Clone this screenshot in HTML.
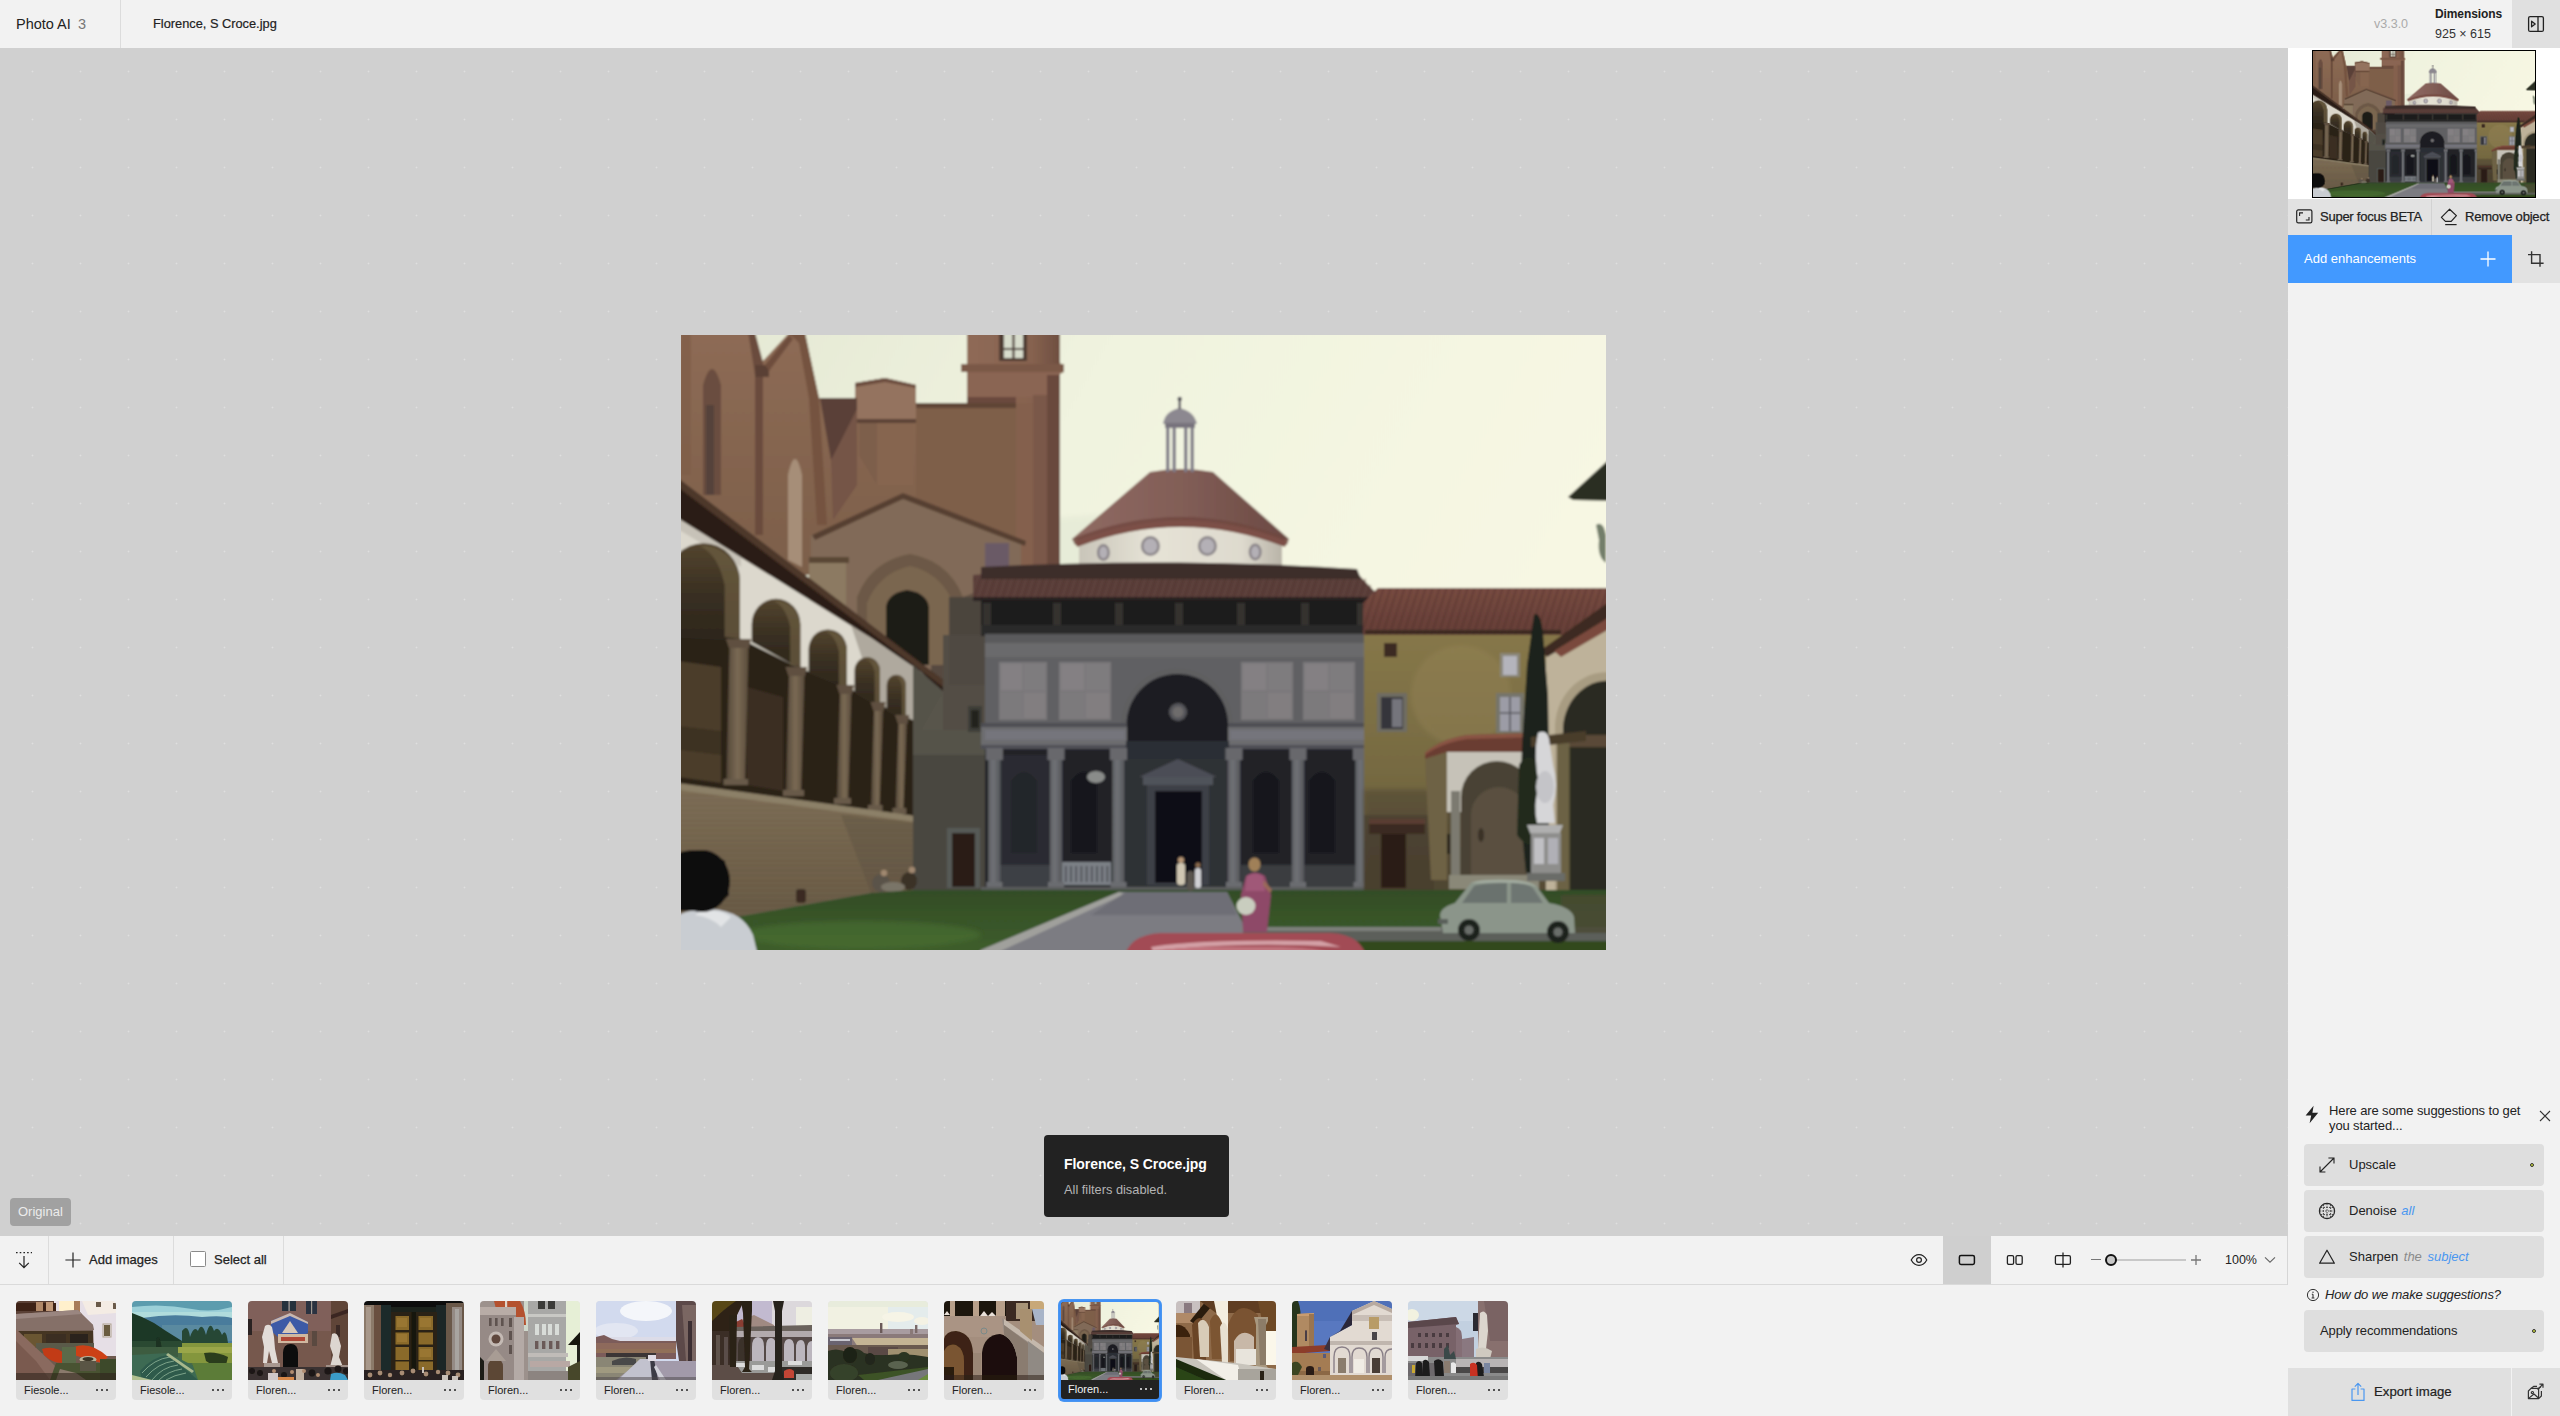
<!DOCTYPE html>
<html>
<head>
<meta charset="utf-8">
<title>Photo AI</title>
<style>
*{box-sizing:border-box;margin:0;padding:0}
html,body{width:2560px;height:1416px;overflow:hidden;background:#f2f2f2;font-family:"Liberation Sans",sans-serif;color:#222}
.abs{position:absolute}
.t{position:absolute;white-space:nowrap;line-height:1}
#topbar{left:0;top:0;width:2560px;height:48px;background:#f2f2f2}
#canvas{left:0;top:48px;width:2288px;height:1188px;background-color:#d0d0d0;
 background-image:radial-gradient(circle at 32.5px 23.5px,#dfdfdf 0.5px,rgba(220,220,220,0) 1.25px);background-size:48px 48px}
#toolbar{left:0;top:1236px;width:2288px;height:49px;background:#f2f2f2;border-bottom:1px solid #dadada}
#strip{left:0;top:1285px;width:2288px;height:131px;background:#f2f2f2}
#panel{left:2288px;top:48px;width:272px;height:1368px;background:#f2f2f2}
.vsep{position:absolute;width:1px;background:#dcdcdc}
.card{position:absolute;left:2304px;width:240px;height:42px;background:#dedede;border-radius:4px}
.th{position:absolute;top:1301px;width:100px;height:99px;border-radius:4px;overflow:hidden;background:#e0e0e0}
.th svg{position:absolute;left:0;top:0;width:100px;height:79px;display:block}
.th .lb{position:absolute;left:8px;top:84px;font-size:11px;color:#222;line-height:1;white-space:nowrap}
.th .dt{position:absolute;left:80px;top:88px;width:13px;height:3px}
.th .dt i{position:absolute;top:0;width:2px;height:2px;border-radius:1px;background:#222}
.th.sel{background:#222;box-shadow:0 0 0 2px #3f8ff5}
.th.sel .lb{color:#f2f2f2}
.th.sel .dt i{background:#f2f2f2}
</style>
</head>
<body>
<!--PHDEFS-START-->
<svg width="0" height="0" style="position:absolute"><defs>
<filter id="soft" x="-2%" y="-2%" width="104%" height="104%"><feGaussianBlur stdDeviation="1.1"/></filter>
<filter id="soft2" x="-5%" y="-5%" width="110%" height="110%"><feGaussianBlur stdDeviation="2.2"/></filter>
<linearGradient id="gsky" x1="0" y1="0" x2="1" y2="0.25"><stop offset="0" stop-color="#e3e7d3"/><stop offset="0.45" stop-color="#f0f3df"/><stop offset="1" stop-color="#f7f7e3"/></linearGradient>
<linearGradient id="gbrick" x1="0" y1="0" x2="0" y2="1"><stop offset="0" stop-color="#8e6b55"/><stop offset="1" stop-color="#7c5f4a"/></linearGradient>
<linearGradient id="gtower" x1="0" y1="0" x2="1" y2="0"><stop offset="0" stop-color="#8f6a57"/><stop offset="0.7" stop-color="#86624f"/><stop offset="1" stop-color="#6e4e40"/></linearGradient>
<linearGradient id="gdome" x1="0" y1="0" x2="1" y2="0"><stop offset="0" stop-color="#8f6a62"/><stop offset="0.5" stop-color="#825e57"/><stop offset="1" stop-color="#6b4943"/></linearGradient>
<linearGradient id="gdrum" x1="0" y1="0" x2="1" y2="0"><stop offset="0" stop-color="#c9c5b9"/><stop offset="0.35" stop-color="#e6e3d6"/><stop offset="0.8" stop-color="#dedace"/><stop offset="1" stop-color="#b9b4a8"/></linearGradient>
<linearGradient id="garc" x1="0" y1="0" x2="0" y2="1"><stop offset="0" stop-color="#54452f"/><stop offset="0.5" stop-color="#3a3022"/><stop offset="1" stop-color="#2c261c"/></linearGradient>
<linearGradient id="gpar" x1="0" y1="0" x2="0" y2="1"><stop offset="0" stop-color="#7e6e56"/><stop offset="1" stop-color="#625440"/></linearGradient>
<linearGradient id="gochre" x1="0" y1="0" x2="0" y2="1"><stop offset="0" stop-color="#877849"/><stop offset="0.55" stop-color="#766a42"/><stop offset="1" stop-color="#544a34"/></linearGradient>
<linearGradient id="ggrass" x1="0" y1="0" x2="0" y2="1"><stop offset="0" stop-color="#334d27"/><stop offset="1" stop-color="#3f5f2b"/></linearGradient>
<linearGradient id="gcol" x1="0" y1="0" x2="1" y2="0"><stop offset="0" stop-color="#5c5e62"/><stop offset="0.4" stop-color="#707276"/><stop offset="1" stop-color="#54565a"/></linearGradient>
<linearGradient id="gccol" x1="0" y1="0" x2="1" y2="0"><stop offset="0" stop-color="#54483a"/><stop offset="0.5" stop-color="#7a6a54"/><stop offset="1" stop-color="#5a4c3c"/></linearGradient>
<linearGradient id="groof" x1="0" y1="0" x2="0" y2="1"><stop offset="0" stop-color="#774a40"/><stop offset="1" stop-color="#643e37"/></linearGradient>
<pattern id="tiles" width="7" height="43" patternUnits="userSpaceOnUse" patternTransform="skewX(-18)"><rect width="7" height="43" fill="none"/><rect x="0" width="1.6" height="43" fill="#4a2a26" opacity="0.45"/></pattern>
<pattern id="bricks" width="9" height="5" patternUnits="userSpaceOnUse"><rect y="0" width="9" height="1" fill="#3a3024" opacity="0.25"/></pattern>
</defs>
<symbol id="ph" viewBox="0 0 925 615" preserveAspectRatio="none">
<g filter="url(#soft)">
<rect x="-10" y="-10" width="945" height="420" fill="url(#gsky)"/>
<ellipse cx="420" cy="250" rx="160" ry="70" fill="#e2e8d4" opacity="0.6" filter="url(#soft2)"/>
<path d="M-10,-10H72L81,27L108,-2H124L138,63H175V48L204,43L235,50V68H286V34H280V29H286V-10H379V28L383,31V37L379,39V240H-10Z" fill="url(#gbrick)"/>
<rect x="286" y="-10" width="93" height="250" fill="url(#gtower)"/>
<path d="M280,29H383V37H280Z" fill="#7a5846"/>
<path d="M286,37H379V62H286Z" fill="#8a6552"/>
<path d="M286,62H335V68H286Z" fill="#6a4a3c"/>
<rect x="352" y="60" width="27" height="180" fill="#7a5848"/>
<rect x="366" y="40" width="13" height="200" fill="#694a3d"/>
<rect x="318" y="-10" width="28" height="36" fill="#4e3a30"/>
<rect x="323" y="-10" width="19" height="33" fill="#d8dccc"/>
<path d="M332.5,-5V23M323,14H342" stroke="#4a3a34" stroke-width="2.2"/>
<path d="M235,68H335V215H235Z" fill="#7e5e4a"/>
<path d="M235,68H335V73H235Z" fill="#5f4436"/>
<rect x="335" y="68" width="17" height="172" fill="#84614e"/>
<path d="M174,48L204,43L235,50V84H174Z" fill="#94735e"/>
<path d="M174,48L204,43L235,50V53L204,47L174,52Z" fill="#6a4c3e"/>
<path d="M178,84H232V150H196L178,120Z" fill="#7d5e4c"/>
<path d="M196,84H232V150H196Z" fill="#86654f"/>
<path d="M174,84H235V88H174Z" fill="#5c4234"/>
<path d="M139,63H176V108L150,125Z" fill="#5a4038"/>
<path d="M150,125L176,74V150L152,185Z" fill="#745446"/>
<path d="M72,-10L82,27V200H74V40L66,-10Z" fill="#6b4c3d"/>
<path d="M74,30H88V42H74Z" fill="#5a4034"/>
<path d="M22,160V50Q31,18 40,50V160Z" fill="#6a4e40"/>
<path d="M25,160V70H33V160Z" fill="#54423a"/>
<path d="M0,-10H10V140H0Z" fill="#7d5c48" opacity="0.6"/>
<path d="M108,-2H124L138,63L146,190H136L128,63L118,8Z" fill="#74533f"/>
<path d="M107,225V140Q114,108 121,140V232Z" fill="#a68e78"/>
<path d="M84,30L108,0L112,4L88,36Z" fill="#6e4e3e"/>
<path d="M222,161L340,208V400H130V200Z" fill="#816b58"/>
<path d="M222,158L345,206L344,211L222,164L134,205L131,200Z" fill="#574032"/>
<path d="M128,222H165V300H128Z" fill="#8c7a62"/>
<path d="M128,222H168V228H128Z" fill="#5a4636"/>
<rect x="304" y="208" width="24" height="26" fill="#6a5a66"/>
<path d="M250,262L282,262L340,240V400H250Z" fill="#4a3e36" opacity="0.55"/>
<path d="M250,300H340V400H250Z" fill="#463c36" opacity="0.4"/>
<path d="M176,330V262Q190,226 229,219Q268,226 282,262V330Z" fill="#6c5846"/>
<path d="M186,330V268Q198,238 229,231Q260,238 272,268V330Z" fill="#7a6650"/>
<path d="M205,330V272Q207,258 226,255Q246,258 248,272V330Z" fill="#1f1c18"/>
<path d="M-10,138L266,348V364L240,337L190,303L-10,179Z" fill="#2a1e17"/>
<path d="M-10,138L266,348L262,352L-10,147Z" fill="#4e382c"/>
<path d="M-10,179L190,303L240,337L266,364L262,400L246,394L225,384L197,371L164,353L116,334L58,305L-10,298Z" fill="#dcd8cd"/>
<path d="M170,290L240,337L266,364L262,400L246,394L225,384L197,371Z" fill="#a09a8e" opacity="0.75"/>
<path d="M-10,179L60,222L60,232L-10,190Z" fill="#b9b4aa" opacity="0.6"/>
<path d="M-10,296L58,303L116,332L164,351L197,369L225,382L246,392V487L-10,454Z" fill="#2b2218"/>
<path d="M-14,302V246.5A36.5,38.325 0 0 1 59,246.5V306Z" fill="url(#garc)"/>
<path d="M18.85,211A36.5,38.325 0 0 1 59,246.5V304L43.67,302V250.15Q37.1,219.125 18.85,211Z" fill="#6b5c40" opacity="0.75"/>
<path d="M70.7,307V289.35A24.35,25.567500000000003 0 0 1 119.4,289.35V334Z" fill="url(#garc)"/>
<path d="M92.61500000000001,266A24.35,25.567500000000003 0 0 1 119.4,289.35V332L109.173,330V291.785Q104.79,271.0875 92.61500000000001,266Z" fill="#6b5c40" opacity="0.75"/>
<path d="M127.6,338V314.59999999999997A19.200000000000003,20.160000000000004 0 0 1 166,314.59999999999997V354Z" fill="url(#garc)"/>
<path d="M144.88,296.4A19.200000000000003,20.160000000000004 0 0 1 166,314.59999999999997V352L157.936,350V316.52Q154.48,300.2 144.88,296.4Z" fill="#6b5c40" opacity="0.75"/>
<path d="M173.5,358V335.75A12.75,13.387500000000001 0 0 1 199,335.75V373Z" fill="url(#garc)"/>
<path d="M184.975,324A12.75,13.387500000000001 0 0 1 199,335.75V371L193.645,369V337.025Q191.35,326.1875 184.975,324Z" fill="#6b5c40" opacity="0.75"/>
<path d="M205.7,376V349.95000000000005A9.650000000000006,10.132500000000006 0 0 1 225,349.95000000000005V386Z" fill="url(#garc)"/>
<path d="M214.385,341.3A9.650000000000006,10.132500000000006 0 0 1 225,349.95000000000005V384L220.947,382V350.915Q219.21,342.71250000000003 214.385,341.3Z" fill="#6b5c40" opacity="0.75"/>
<path d="M233,388V357.5A6.5,6.825 0 0 1 246,357.5V394Z" fill="url(#garc)"/>
<path d="M238.85,352A6.5,6.825 0 0 1 246,357.5V392L243.27,390V358.15Q242.1,352.625 238.85,352Z" fill="#6b5c40" opacity="0.75"/>
<path d="M-10,325L40,332V448L-10,441Z" fill="#4b3c2a"/>
<path d="M66,352L102,362V456L66,450Z" fill="#3a2f21"/>
<path d="M-10,390L40,396V420L-10,414Z" fill="#3e3224"/>
<path d="M48.5,312H67.5L64,449H45.5Z" fill="url(#gccol)"/>
<path d="M45.0,304H70L68,313H48.0Z" fill="#5e5040"/>
<rect x="42.5" y="444" width="24.5" height="6" fill="#675a48"/>
<path d="M108,340H123.5L120,460H105Z" fill="url(#gccol)"/>
<path d="M104.5,332H126L124,341H107.5Z" fill="#5e5040"/>
<rect x="102" y="455" width="21" height="6" fill="#675a48"/>
<path d="M159,358H170.5L167,468H156Z" fill="url(#gccol)"/>
<path d="M155.5,350H173L171,359H158.5Z" fill="#5e5040"/>
<rect x="153" y="463" width="17" height="6" fill="#675a48"/>
<path d="M193,375H202.0L198.5,475H190Z" fill="url(#gccol)"/>
<path d="M189.5,367H204.5L202.5,376H192.5Z" fill="#5e5040"/>
<rect x="187" y="470" width="14.5" height="6" fill="#675a48"/>
<path d="M217.5,388H225.8L222.3,478H214.5Z" fill="url(#gccol)"/>
<path d="M214.0,380H228.3L226.3,389H217.0Z" fill="#5e5040"/>
<rect x="211.5" y="473" width="13.800000000000011" height="6" fill="#675a48"/>
<path d="M-10,450L235,484V556L190,558L50,583L40,625H-10Z" fill="url(#gpar)"/>
<path d="M-10,450L235,484V556L190,558L50,583L40,625H-10Z" fill="url(#bricks)" opacity="0.5"/>
<path d="M-10,447L235,481V487L-10,454Z" fill="#8c8068"/>
<path d="M160,480L235,488V556L190,558Z" fill="#5e5240" opacity="0.45"/>
<path d="M232,330L262,356L266,345L306,345V556H232Z" fill="#55524a"/>
<path d="M240,395H306V300H262V356Z" fill="#58544b"/>
<path d="M268,262H306V350H268Z" fill="#4c443c"/>
<path d="M262,300H306V395H262Z" fill="#514c44" opacity="0.8"/>
<path d="M232,420H306V556H232Z" fill="#44433d" opacity="0.75"/>
<rect x="266" y="493" width="33" height="60" fill="#565a56"/>
<rect x="271" y="498" width="23" height="54" fill="#2a1a13"/>
<rect x="287" y="371" width="14" height="26" fill="#3c3e38"/><rect x="290" y="375" width="8" height="18" fill="#22241f"/>
<ellipse cx="200" cy="548" rx="9" ry="9" fill="#5a5248"/><ellipse cx="228" cy="546" rx="8" ry="9" fill="#3a3028"/><ellipse cx="212" cy="552" rx="12" ry="5" fill="#7a7468"/>
<circle cx="203" cy="538" r="3.2" fill="#a08870"/><circle cx="231" cy="535" r="3.2" fill="#a08870"/>
<rect x="115" y="554" width="10" height="14" rx="3" fill="#3a2c22"/>
<path d="M469,137Q500,131 532,137L608,204Q500,228 391,204Z" fill="url(#gdome)"/>
<path d="M391,204Q500,160 608,204L606,210Q500,170 394,210Z" fill="#6e463e" opacity="0.8"/>
<path d="M398,208Q500,168 601,208V236H398Z" fill="url(#gdrum)"/>
<path d="M394,206Q500,164 606,206L604,212Q500,172 396,212Z" fill="#7b5046"/>
<ellipse cx="422.4" cy="217.5" rx="6.5" ry="8.5" fill="#8a8488"/><ellipse cx="422.4" cy="217.5" rx="4" ry="6" fill="#b4b0b6"/>
<ellipse cx="469.4" cy="211" rx="9.5" ry="10.0" fill="#8a8488"/><ellipse cx="469.4" cy="211" rx="7" ry="7.5" fill="#b4b0b6"/>
<ellipse cx="526.4" cy="211" rx="9.5" ry="10.0" fill="#8a8488"/><ellipse cx="526.4" cy="211" rx="7" ry="7.5" fill="#b4b0b6"/>
<ellipse cx="574.2" cy="217" rx="6.5" ry="8.5" fill="#8a8488"/><ellipse cx="574.2" cy="217" rx="4" ry="6" fill="#b4b0b6"/>
<path d="M482,89Q484,76 498.5,73Q513,76 516,89Z" fill="#8c8890"/>
<rect x="484" y="88" width="30" height="5" fill="#77727c"/>
<rect x="485" y="92" width="3.4" height="45" fill="#7e7a86"/>
<rect x="491.5" y="92" width="3.4" height="45" fill="#7e7a86"/>
<rect x="503" y="92" width="3.4" height="45" fill="#7e7a86"/>
<rect x="509.5" y="92" width="3.4" height="45" fill="#7e7a86"/>
<rect x="497.5" y="63" width="2.4" height="11" fill="#55505a"/><circle cx="498.7" cy="64" r="2.2" fill="#4a4650"/>
<path d="M292,240Q496,220 676,238L700,263H292Z" fill="#5b403b"/>
<path d="M300,232Q496,222 676,234L680,244H300Z" fill="#3e2e2c"/>
<path d="M292,243H684L700,263H292Z" fill="url(#tiles)"/>
<path d="M292,262H700V266H292Z" fill="#2a2020"/>
<rect x="300" y="265" width="388" height="36" fill="#1d1c1c"/>
<rect x="302" y="268" width="8" height="32" fill="#34322f"/>
<rect x="372" y="268" width="8" height="32" fill="#34322f"/>
<rect x="434" y="268" width="8" height="32" fill="#34322f"/>
<rect x="494" y="268" width="8" height="32" fill="#34322f"/>
<rect x="556" y="268" width="8" height="32" fill="#34322f"/>
<rect x="620" y="268" width="8" height="32" fill="#34322f"/>
<rect x="676" y="268" width="8" height="32" fill="#34322f"/>
<rect x="300" y="290" width="388" height="10" fill="#2a2a2a"/>
<rect x="304" y="299" width="384" height="92" fill="#616164"/>
<rect x="304" y="299" width="384" height="9" fill="#5a5a5c"/>
<rect x="304" y="308" width="384" height="14" fill="#6a6a6c"/>
<rect x="318" y="327" width="48" height="58" fill="#7a787a"/>
<rect x="320" y="329" width="21.0" height="26" fill="#848083"/><rect x="343.0" y="329" width="21.0" height="26" fill="#7e7c7e"/>
<rect x="320" y="358" width="21.0" height="25" fill="#7c7a7c"/><rect x="343.0" y="358" width="21.0" height="25" fill="#827e80"/>
<rect x="378" y="327" width="52" height="58" fill="#7a787a"/>
<rect x="380" y="329" width="23.0" height="26" fill="#848083"/><rect x="405.0" y="329" width="23.0" height="26" fill="#7e7c7e"/>
<rect x="380" y="358" width="23.0" height="25" fill="#7c7a7c"/><rect x="405.0" y="358" width="23.0" height="25" fill="#827e80"/>
<rect x="560" y="327" width="52" height="58" fill="#7a787a"/>
<rect x="562" y="329" width="23.0" height="26" fill="#848083"/><rect x="587.0" y="329" width="23.0" height="26" fill="#7e7c7e"/>
<rect x="562" y="358" width="23.0" height="25" fill="#7c7a7c"/><rect x="587.0" y="358" width="23.0" height="25" fill="#827e80"/>
<rect x="622" y="327" width="52" height="58" fill="#7a787a"/>
<rect x="624" y="329" width="23.0" height="26" fill="#848083"/><rect x="649.0" y="329" width="23.0" height="26" fill="#7e7c7e"/>
<rect x="624" y="358" width="23.0" height="25" fill="#7c7a7c"/><rect x="649.0" y="358" width="23.0" height="25" fill="#827e80"/>
<path d="M440,412V389A56,56 0 0 1 552,389V412Z" fill="#5e5e60"/>
<path d="M445.6,412V389.6A50.7,50.7 0 0 1 547,389.6V412Z" fill="#1c1c21"/>
<circle cx="497" cy="377" r="9" fill="#55555a"/><circle cx="497" cy="377" r="5.5" fill="#6e6c6c"/>
<rect x="300" y="388" width="146" height="26" fill="#6c6c6e"/><rect x="547" y="388" width="145" height="26" fill="#6c6c6e"/>
<rect x="304" y="395" width="140" height="10" fill="#74747c"/><rect x="549" y="395" width="140" height="10" fill="#74747c"/>
<rect x="300" y="388" width="146" height="4" fill="#4e4e52"/><rect x="547" y="388" width="145" height="4" fill="#4e4e52"/>
<rect x="300" y="410" width="146" height="4" fill="#505056"/><rect x="547" y="410" width="145" height="4" fill="#505056"/>
<rect x="304" y="414" width="384" height="140" fill="#202226"/>
<rect x="445" y="406" width="103" height="148" fill="#2e3036"/>
<rect x="445" y="406" width="103" height="18" fill="#2c2e34"/>
<path d="M330,518V446Q343,428 356,446V518Z" fill="#15161a"/>
<path d="M390,518V446Q403,428 416,446V518Z" fill="#15161a"/>
<path d="M572,518V446Q585,428 598,446V518Z" fill="#15161a"/>
<path d="M628,518V446Q641,428 654,446V518Z" fill="#15161a"/>
<rect x="320" y="420" width="48" height="110" fill="#33353a" opacity="0.5"/>
<path d="M458,442L497,424L536,442Z" fill="#4c4e56"/>
<rect x="462" y="442" width="70" height="8" fill="#50525a"/>
<rect x="466" y="450" width="62" height="100" fill="#3e4046"/>
<rect x="474" y="456" width="47" height="92" fill="#101014"/>
<ellipse cx="415" cy="442" rx="9" ry="6" fill="#8a8c8a"/>
<rect x="381" y="527" width="49" height="23" fill="#7c8086"/>
<rect x="384.0" y="531" width="1.6" height="16" fill="#4a4c52"/>
<rect x="389.2" y="531" width="1.6" height="16" fill="#4a4c52"/>
<rect x="394.4" y="531" width="1.6" height="16" fill="#4a4c52"/>
<rect x="399.6" y="531" width="1.6" height="16" fill="#4a4c52"/>
<rect x="404.8" y="531" width="1.6" height="16" fill="#4a4c52"/>
<rect x="410.0" y="531" width="1.6" height="16" fill="#4a4c52"/>
<rect x="415.2" y="531" width="1.6" height="16" fill="#4a4c52"/>
<rect x="420.4" y="531" width="1.6" height="16" fill="#4a4c52"/>
<rect x="425.6" y="531" width="1.6" height="16" fill="#4a4c52"/>
<rect x="318" y="530" width="58" height="22" fill="#3e4044"/><rect x="560" y="530" width="120" height="22" fill="#3a3c40"/>
<rect x="307.2" y="424" width="12.4" height="128" fill="url(#gcol)"/>
<rect x="304.9" y="413" width="17" height="12" fill="#67686c"/>
<rect x="305.4" y="547" width="16" height="7" fill="#6a6c70"/>
<rect x="368.8" y="424" width="12.4" height="128" fill="url(#gcol)"/>
<rect x="366.5" y="413" width="17" height="12" fill="#67686c"/>
<rect x="367" y="547" width="16" height="7" fill="#6a6c70"/>
<rect x="431.3" y="424" width="12.4" height="128" fill="url(#gcol)"/>
<rect x="429.0" y="413" width="17" height="12" fill="#67686c"/>
<rect x="429.5" y="547" width="16" height="7" fill="#6a6c70"/>
<rect x="546.8" y="424" width="12.4" height="128" fill="url(#gcol)"/>
<rect x="544.5" y="413" width="17" height="12" fill="#67686c"/>
<rect x="545" y="547" width="16" height="7" fill="#6a6c70"/>
<rect x="610.8" y="424" width="12.4" height="128" fill="url(#gcol)"/>
<rect x="608.5" y="413" width="17" height="12" fill="#67686c"/>
<rect x="609" y="547" width="16" height="7" fill="#6a6c70"/>
<rect x="674.3" y="424" width="12.4" height="128" fill="url(#gcol)"/>
<rect x="672.0" y="413" width="17" height="12" fill="#67686c"/>
<rect x="672.5" y="547" width="16" height="7" fill="#6a6c70"/>
<rect x="300" y="552" width="392" height="5" fill="#5a5c5c"/>
<rect x="683" y="290" width="250" height="270" fill="url(#gochre)"/>
<ellipse cx="780" cy="360" rx="50" ry="50" fill="#96845a" opacity="0.4" filter="url(#soft2)"/>
<path d="M697,253H935V300H682V268Z" fill="url(#groof)"/>
<path d="M697,253H935V300H682V268Z" fill="url(#tiles)"/>
<path d="M684,295H880V299H684Z" fill="#3a2a24"/>
<rect x="703" y="308" width="13" height="14" fill="#3a2a22"/>
<rect x="696" y="358" width="30" height="39" fill="#6e6c62"/><rect x="700" y="362" width="22" height="32" fill="#34343a"/><rect x="711" y="364" width="10" height="28" fill="#74747c"/>
<rect x="819" y="318" width="20" height="24" fill="#8a8678"/><rect x="822" y="321" width="14" height="19" fill="#b4b4bc"/>
<rect x="815" y="358" width="28" height="40" fill="#76746a"/><rect x="819" y="362" width="20" height="34" fill="#9c9ca6"/><path d="M829,362V396M819,378H839" stroke="#55555c" stroke-width="1.6"/>
<rect x="683" y="455" width="170" height="101" fill="#4c4230" opacity="0.5" filter="url(#soft2)"/><rect x="683" y="480" width="70" height="76" fill="#443a2c" opacity="0.55"/>
<path d="M688,484H744V499H688Z" fill="#3a2c22"/><path d="M688,484H744V489H688Z" fill="#5a3c30"/>
<rect x="700" y="499" width="25" height="54" fill="#2a1d19"/>
<rect x="757" y="499" width="12" height="20" fill="#24221e"/><rect x="825" y="500" width="13" height="19" fill="#24221e"/>
<path d="M744,418Q760,404 786,400L856,398V417H766L744,424Z" fill="#6a3c32"/>
<path d="M744,420Q760,408 786,404L856,402V398L786,400Q760,404 744,418Z" fill="#8a5444"/>
<rect x="766" y="417" width="90" height="60" fill="#c6c2b8"/>
<path d="M744,424L766,417V545H750Z" fill="#6e6244"/>
<path d="M780,545V462A36,36 0 0 1 852,462V545Z" fill="#494336"/>
<path d="M790,545V480A28,28 0 0 1 846,480V545Z" fill="#5a5040"/>
<rect x="770" y="456" width="9" height="90" fill="#7c7a70"/>
<rect x="768" y="540" width="90" height="14" fill="#8a8878"/>
<ellipse cx="800" cy="500" rx="3" ry="7" fill="#3a3228"/>
<path d="M865,312L935,268V560H865Z" fill="#beb29a"/>
<path d="M860,315L935,262V282L866,322Z" fill="#3c2a22"/>
<path d="M873,316L935,278V290L880,322Z" fill="#7a4a3c"/>
<path d="M874,560V390A52,56 0 0 1 935,338V560Z" fill="#a89c82"/>
<path d="M882,560V392A46,50 0 0 1 935,346V560Z" fill="#2c2a22"/>
<path d="M882,400H935V412H882Z" fill="#5a4a38"/>
<path d="M887,162L935,118V166L892,165Z" fill="#2a2e22"/>
<path d="M915,190Q922,185 925,200L925,228Q916,222 918,205Z" fill="#3a4a38" opacity="0.7"/>
<path d="M853,280Q859,275 862,298L867,360L868,420Q870,500 863,538H845Q838,480 841,410L846,330Z" fill="#1b241a"/>
<path d="M838,430Q850,410 862,440L866,500Q850,520 836,500Z" fill="#202a1e"/>
<rect x="876" y="406" width="12.5" height="153" fill="#6c6244"/>
<path d="M850,402L905,396V406L850,412Z" fill="#4a3c2c"/>
<path d="M857,398Q866,394 868,404L872,430Q878,450 872,470L874,488H856Q852,470 858,450Q852,420 857,398Z" fill="#d6d6d8"/>
<ellipse cx="864" cy="452" rx="9" ry="16" fill="#c4c4c8"/>
<path d="M846,490H882L878,500H850Z" fill="#b0b0b0"/>
<rect x="850" y="498" width="30" height="44" fill="#8e8e8c"/><rect x="853" y="503" width="10" height="26" fill="#c0c0c4"/><rect x="867" y="503" width="10" height="26" fill="#b0b0b6"/>
<rect x="846" y="538" width="38" height="8" fill="#6a6c68"/>
<path d="M50,583L190,558L235,555H935V625H30Z" fill="url(#ggrass)"/>
<ellipse cx="180" cy="600" rx="120" ry="14" fill="#4e7434" opacity="0.5" filter="url(#soft2)"/>
<path d="M438,557H546L566,596H700V606H600L590,625H292L300,615Z" fill="#7c7c82"/>
<path d="M438,557L300,615L292,625H300L444,559Z" fill="#a0a09c"/>
<path d="M445,557H546L556,580H410Z" fill="#6e6e76"/>
<path d="M560,592H935V607H566Z" fill="#5c5e5a"/>
<path d="M560,592H760V596H560Z" fill="#7e807c"/>
<path d="M590,606H935V625H585Z" fill="#33481f"/>
<path d="M880,560H935V598H880Z" fill="#4a4a32" opacity="0.8"/>
<rect x="496" y="528" width="8" height="22" rx="3" fill="#cfc6b2"/><circle cx="500" cy="525" r="3" fill="#b89878"/>
<rect x="514" y="533" width="6" height="20" rx="2.5" fill="#d0d0d4"/><circle cx="517" cy="530" r="2.6" fill="#8a6a50"/>
<rect x="506" y="536" width="7" height="20" rx="3" fill="#5a5450"/>
<path d="M565,541Q574,534 584,541L590,560L586,597H562L560,560Z" fill="#8e4868"/>
<path d="M566,541Q574,536 582,541L584,556H564Z" fill="#a05878"/>
<ellipse cx="573.5" cy="529.5" rx="6" ry="7" fill="#a08058"/>
<ellipse cx="565" cy="571" rx="9.5" ry="9" fill="#c9cdbf"/>
<path d="M583,545L591,555L589,558L582,550Z" fill="#9a6a58"/>
<path d="M443,625Q446,600 480,598H650Q682,600 686,625Z" fill="#a24b54"/>
<path d="M470,612Q520,604 640,606L660,612Q560,606 472,616Z" fill="#d3a0a6"/>
<path d="M455,625Q470,614 520,612H600Q650,613 670,625Z" fill="#c88088" opacity="0.8"/>
<path d="M759,580Q760,572 774,568L790,548Q800,544 830,545Q850,546 856,552L868,568Q890,572 893,582L894,598H762Z" fill="#8b958a"/>
<path d="M793,551Q800,548 826,548V568H781Z" fill="#6a726e"/><path d="M830,548Q846,548 852,553L862,568H830Z" fill="#6e7672"/>
<path d="M790,548Q800,544 830,545Q850,546 856,552L850,550Q830,546 800,548Z" fill="#a4aea2"/>
<circle cx="788" cy="595" r="11" fill="#1e201e"/><circle cx="877" cy="597" r="11" fill="#1e201e"/><circle cx="788" cy="595" r="4.5" fill="#6a6e6a"/><circle cx="877" cy="597" r="4.5" fill="#6a6e6a"/>
<rect x="757" y="584" width="10" height="5" fill="#5a5e5a"/>
<path d="M-10,625V586Q0,574 30,574Q62,576 72,600L78,625Z" fill="#c9cdd2"/>
<path d="M20,576Q40,574 50,582L40,592Q30,582 14,580Z" fill="#e2e4e6"/>
<ellipse cx="21" cy="546" rx="28" ry="31" fill="#0c0a0a"/>
<path d="M-10,520Q20,508 44,526L48,560Q30,580 -10,575Z" fill="#0c0a0a"/>
</g></symbol></svg>

<!--PHDEFS-END-->
<!-- TOP BAR -->
<div id="topbar" class="abs">
  <div class="t" style="left:16px;top:17px;font-size:14.5px;color:#222">Photo AI</div>
  <div class="t" style="left:78px;top:17px;font-size:14.5px;color:#777">3</div>
  <div class="vsep" style="left:120px;top:0;height:48px"></div>
  <div class="t" style="left:153px;top:18px;font-size:12.8px;color:#222;-webkit-text-stroke:0.2px #222">Florence, S Croce.jpg</div>
  <div class="t" style="left:2374px;top:18px;font-size:12.5px;color:#aaa">v3.3.0</div>
  <div class="t" style="left:2435px;top:8px;font-size:12px;font-weight:bold;color:#222;letter-spacing:-0.1px">Dimensions</div>
  <div class="t" style="left:2435px;top:28px;font-size:12.5px;color:#333">925 × 615</div>
  <div class="abs" style="left:2512px;top:0;width:48px;height:48px;background:#e0e0e0">
    <svg class="abs" style="left:15px;top:15px" width="18" height="18" viewBox="0 0 18 18" fill="none" stroke="#222" stroke-width="1.3"><rect x="1.6" y="1.6" width="14.8" height="14.8" rx="1.5"/><path d="M11 1.6V16.4M4.6 6.2L8.2 9L4.6 11.8Z" stroke-linejoin="round"/></svg>
  </div>
</div>

<!-- CANVAS -->
<div id="canvas" class="abs"></div>
<div id="photo" class="abs" style="left:681px;top:335px;width:925px;height:615px;background:#777">
<svg class="abs" style="left:0;top:0" width="925" height="615" viewBox="0 0 925 615"><use href="#ph"/></svg>
</div>

<!-- original badge -->
<div class="abs" style="left:10px;top:1198px;width:61px;height:28px;border-radius:4px;background:#a1a1a1"></div>
<div class="t" style="left:18px;top:1205px;font-size:13px;color:#ececec">Original</div>

<!-- tooltip -->
<div class="abs" style="left:1044px;top:1135px;width:185px;height:82px;border-radius:4px;background:#222"></div>
<div class="t" style="left:1064px;top:1157px;font-size:14px;font-weight:bold;color:#fff;letter-spacing:-0.05px">Florence, S Croce.jpg</div>
<div class="t" style="left:1064px;top:1184px;font-size:12.8px;color:#b4b4b4">All filters disabled.</div>

<!-- TOOLBAR -->
<div id="toolbar" class="abs"></div>
<!--TOOLBAR-START-->
<svg class="abs" style="left:14px;top:1250px" width="20" height="20" viewBox="0 0 20 20" fill="none" stroke="#222" stroke-width="1.2"><path d="M2 2.6H18" stroke-dasharray="1.6 2.1" stroke-width="1.4"/><path d="M10 6V17.4M5.2 12.8L10 17.6L14.8 12.8"/></svg>
<div class="vsep" style="left:48px;top:1236px;height:48px"></div>
<svg class="abs" style="left:64px;top:1251px" width="18" height="18" viewBox="0 0 18 18" fill="none" stroke="#222" stroke-width="1.2"><path d="M9 1.4V16.6M1.4 9H16.6"/></svg>
<div class="t" style="left:89px;top:1253px;font-size:13px;color:#222;-webkit-text-stroke:0.25px #222">Add images</div>
<div class="vsep" style="left:173px;top:1236px;height:48px"></div>
<div class="abs" style="left:190px;top:1251px;width:16px;height:16px;background:#fff;border:1px solid #8a8a8a;border-radius:1.5px"></div>
<div class="t" style="left:214px;top:1253px;font-size:13px;color:#222;-webkit-text-stroke:0.25px #222">Select all</div>
<div class="vsep" style="left:283px;top:1236px;height:48px"></div>

<!-- right tools -->
<svg class="abs" style="left:1910px;top:1251px" width="18" height="18" viewBox="0 0 18 18" fill="none" stroke="#222" stroke-width="1.2"><path d="M1.2 9C3.2 5.4 5.8 3.6 9 3.6S14.8 5.4 16.8 9C14.8 12.6 12.2 14.4 9 14.4S3.2 12.6 1.2 9Z" stroke-linejoin="round"/><circle cx="9" cy="9" r="2.4"/></svg>
<div class="abs" style="left:1943px;top:1236px;width:48px;height:48px;background:#cfcfcf"></div>
<svg class="abs" style="left:1958px;top:1253px" width="18" height="14" viewBox="0 0 18 14" fill="none" stroke="#111" stroke-width="1.5"><rect x="1.4" y="2.4" width="15" height="9" rx="1.6"/></svg>
<svg class="abs" style="left:2006px;top:1253px" width="18" height="14" viewBox="0 0 18 14" fill="none" stroke="#222" stroke-width="1.3"><rect x="1.4" y="2.6" width="6.2" height="8.8" rx="1.4"/><rect x="10" y="2.6" width="6.2" height="8.8" rx="1.4"/></svg>
<svg class="abs" style="left:2054px;top:1251px" width="18" height="18" viewBox="0 0 18 18" fill="none" stroke="#222" stroke-width="1.3"><path d="M9 4.6H2.8Q1.4 4.6 1.4 6V12Q1.4 13.4 2.8 13.4H9M9 4.6H15Q16.4 4.6 16.4 6V12Q16.4 13.4 15 13.4H9M9 1.6V16.4"/></svg>
<div class="abs" style="left:2091px;top:1259px;width:10px;height:1.4px;background:#777"></div>
<div class="abs" style="left:2112px;top:1259.4px;width:74px;height:1.2px;background:#c8c8c8"></div>
<div class="abs" style="left:2105px;top:1254px;width:12px;height:12px;border-radius:6px;background:#c8c8c8;border:2px solid #111"></div>
<svg class="abs" style="left:2190px;top:1254px" width="12" height="12" viewBox="0 0 12 12" fill="none" stroke="#777" stroke-width="1.3"><path d="M6 1V11M1 6H11"/></svg>
<div class="t" style="left:2225px;top:1254px;font-size:12.5px;color:#222">100%</div>
<svg class="abs" style="left:2264px;top:1255px" width="12" height="10" viewBox="0 0 12 10" fill="none" stroke="#666" stroke-width="1.1"><path d="M1 2.4L6 7.2L11 2.4"/></svg>
<div class="vsep" style="left:2287px;top:1236px;height:180px;background:#d6d6d6"></div>
<!--TOOLBAR-END-->

<!-- STRIP -->
<div id="strip" class="abs"></div>
<!--STRIP-START-->
<svg width="0" height="0" style="position:absolute"><defs><filter id="tb" x="-5%" y="-5%" width="110%" height="110%"><feGaussianBlur stdDeviation="0.6"/></filter></defs></svg>
<div class="th" style="left:16px"><svg viewBox="0 0 100 79" preserveAspectRatio="none"><g filter="url(#tb)"><rect x="-5" y="-5" width="110" height="89" fill="#777"/><rect width="100" height="79" fill="#6e5a50"/>
<path d="M0,0H100V14H0Z" fill="#5a4034"/>
<path d="M38,0H100V55H78L77,24L62,10H38Z" fill="#e6dfe6"/>
<path d="M43,0H62V12H43Z" fill="#fff0cc"/><path d="M58,0H64V11H58Z" fill="#a87c58"/>
<path d="M66,0H100V12L72,14Z" fill="#f4ece4"/>
<rect x="80" y="1" width="5" height="5" fill="#6a5a48"/><rect x="97" y="2" width="3" height="6" fill="#6a5a48"/>
<path d="M0,2H40V10H0Z" fill="#3c2418"/><path d="M20,1H27V10H20Z" fill="#b08868"/><path d="M30,1H37V10H30Z" fill="#c09878"/>
<path d="M0,13L62,9L77,24L78,29L0,31Z" fill="#857068"/>
<path d="M0,13L62,9L66,13L0,18Z" fill="#9a8680"/>
<path d="M2,30H77V47H2Z" fill="#453624"/>
<path d="M8,33H26V46H8Z" fill="#6a5630"/><path d="M30,33H50V46H30Z" fill="#3a2e20"/><path d="M54,33H72V46H54Z" fill="#2c241a"/>
<rect x="88" y="24" width="6" height="11" fill="#6a5c40"/><rect x="87" y="23" width="8" height="13" fill="none" stroke="#b0a490" stroke-width="1"/>
<path d="M20,42H78V52H20Z" fill="#5a5a48"/>
<path d="M0,28L32,58L46,72L40,79H0Z" fill="#8a6a5e"/>
<path d="M0,40L20,60L34,79H0Z" fill="#7a5a50"/>
<path d="M26,48Q40,44 50,54L46,62Q36,62 28,54Z" fill="#c23a18"/>
<path d="M58,46Q74,40 92,56L86,62Q70,58 58,54Z" fill="#cc4018"/>
<path d="M46,46H60V62H46Z" fill="#5a6a48"/>
<path d="M40,62H100V79H34Z" fill="#4a5232"/>
<path d="M84,58H100V79H84Z" fill="#3e4a2a"/>
<ellipse cx="72" cy="58.5" rx="8.5" ry="3.6" fill="#b8b098"/><ellipse cx="72" cy="58" rx="5.5" ry="2" fill="#3a3428"/><path d="M64,60H80V70H64Z" fill="#5a5444"/>
<path d="M44,68L60,72L70,79H40Z" fill="#8a7a6c"/>
<path d="M0,72H100V79H0Z" fill="#2c2018" opacity="0.55"/></g></svg><div class="lb">Fiesole...</div><div class="dt"><i style="left:0"></i><i style="left:5px"></i><i style="left:10px"></i></div></div>
<div class="th" style="left:132px"><svg viewBox="0 0 100 79" preserveAspectRatio="none"><g filter="url(#tb)"><rect x="-5" y="-5" width="110" height="89" fill="#777"/><rect width="100" height="79" fill="#4a6a48"/>
<rect width="100" height="18" fill="#5c9cae"/>
<path d="M0,6Q30,2 60,8Q80,12 100,6V16H0Z" fill="#9cd0d8"/>
<path d="M0,11H100V17H0Z" fill="#b0dcdc"/>
<path d="M10,17Q40,12 70,16Q90,14 100,17V42H10Z" fill="#4a7c9c"/>
<path d="M30,24H100V40H30Z" fill="#5a8aa0"/>
<path d="M0,12L10,16L22,22L34,30L50,40L50,48H0Z" fill="#1c3826"/>
<path d="M0,40H60V52H0Z" fill="#2c4a30"/>
<path d="M50,30Q56,22 58,36Q62,24 66,30Q70,20 74,34Q78,18 82,30Q86,24 90,34Q94,26 96,42L96,44H50Z" fill="#254636"/>
<path d="M24,38Q28,30 30,50H24Z" fill="#1a3020"/>
<path d="M50,42H100V62H50Z" fill="#84963e"/>
<path d="M46,46H100V52H46Z" fill="#9aa648"/>
<path d="M72,52Q84,50 96,56L94,64Q82,66 74,60Z" fill="#2c3c1c"/>
<path d="M0,46H46V56H0Z" fill="#3e5c40"/>
<path d="M0,54L36,52L60,64L100,72V79H0Z" fill="#3c6a52"/>
<path d="M8,70Q20,56 36,54L66,79H10Z" fill="#2e5a4c"/>
<g fill="none" stroke="#9cc0a0" stroke-width="0.9" opacity="0.8"><path d="M10,72Q22,58 38,56"/><path d="M14,76Q26,62 42,60"/><path d="M20,79Q30,66 46,64"/><path d="M27,79Q36,70 50,68"/><path d="M34,79Q42,74 54,72"/></g>
<path d="M36,52L62,70L60,72L34,54Z" fill="#a8b88c"/>
<path d="M60,62H100V79H66Z" fill="#5c7c38"/>
<path d="M0,74L20,79H0Z" fill="#b0c090"/></g></svg><div class="lb">Fiesole...</div><div class="dt"><i style="left:0"></i><i style="left:5px"></i><i style="left:10px"></i></div></div>
<div class="th" style="left:248px"><svg viewBox="0 0 100 79" preserveAspectRatio="none"><g filter="url(#tb)"><rect x="-5" y="-5" width="110" height="89" fill="#777"/><rect width="100" height="79" fill="#76594e"/>
<path d="M0,0H100V30H0Z" fill="#80605a"/>
<path d="M83,0H100V79H83Z" fill="#5e4438"/>
<path d="M83,14L100,8V12L83,18Z" fill="#3a2820"/>
<rect x="34" y="0" width="14" height="10" fill="#28303e"/><rect x="40.5" y="0" width="1.2" height="10" fill="#b0a8a0"/>
<rect x="58" y="0" width="11" height="13" fill="#2a3040"/><rect x="63" y="0" width="1.2" height="13" fill="#a09890"/>
<path d="M23,30V20L32,16L42,13L52,17L60,21V32L52,36H30Z" fill="#3c5aa6"/>
<path d="M34,32L42,20L50,32Z" fill="#d8c8b8"/>
<path d="M30,33H60V42H30Z" fill="#d0b8a0"/><path d="M33,36H57V40H33Z" fill="#b04838"/>
<path d="M23,20L42,12L60,21L60,23L42,15L23,23Z" fill="#c8b8b0"/>
<rect x="0" y="18" width="4" height="16" fill="#2a2420"/>
<rect x="64" y="30" width="5" height="15" fill="#5a4840"/>
<rect x="88" y="24" width="4" height="12" fill="#3a2c28"/>
<path d="M35,70V52Q35,43 43,43Q50,43 50,52V70Z" fill="#0a0a0a"/>
<path d="M17,25Q21,22 24,26L26,36L27,48L30,62H24L21,50L19,62H15L16,46L14,36Z" fill="#e2dcd8"/>
<rect x="16" y="62" width="16" height="12" fill="#a89890"/>
<path d="M84,33Q88,31 90,35L93,45L91,56L95,66H82L85,54L82,45Z" fill="#dcd6d0"/>
<rect x="78" y="64" width="22" height="6" fill="#a09088"/>
<rect x="0" y="66" width="100" height="13" fill="#3a3230"/>
<g fill="#1c1816"><circle cx="4" cy="70" r="3"/><circle cx="12" cy="72" r="3"/><circle cx="36" cy="74" r="3"/><circle cx="64" cy="72" r="3.4"/><circle cx="80" cy="70" r="3.6"/><circle cx="90" cy="68" r="3.4"/><circle cx="98" cy="70" r="3"/></g>
<path d="M83,73Q90,70 97,74L100,79H82Z" fill="#3a9cc8"/>
<path d="M30,76H46V79H30Z" fill="#d88848"/><path d="M48,68H56V79H48Z" fill="#c0b0a0"/><path d="M20,72H30V79H20Z" fill="#d0c8c8"/>
<g fill="#b08c70"><circle cx="44" cy="71" r="2"/><circle cx="56" cy="70" r="2"/><circle cx="70" cy="74" r="2"/><circle cx="26" cy="70" r="2"/></g></g></svg><div class="lb">Floren...</div><div class="dt"><i style="left:0"></i><i style="left:5px"></i><i style="left:10px"></i></div></div>
<div class="th" style="left:364px"><svg viewBox="0 0 100 79" preserveAspectRatio="none"><g filter="url(#tb)"><rect x="-5" y="-5" width="110" height="89" fill="#777"/><rect width="100" height="79" fill="#1a201e"/>
<rect x="0" y="0" width="100" height="6" fill="#0e1010"/>
<rect x="0" y="4" width="10" height="75" fill="#8c7a6a"/><rect x="2" y="6" width="5" height="66" fill="#a8988a"/>
<rect x="10" y="4" width="7" height="75" fill="#6a5040"/>
<rect x="82" y="2" width="18" height="77" fill="#6a5848"/><rect x="88" y="6" width="10" height="68" fill="#948a84"/><rect x="91" y="8" width="4" height="64" fill="#a8a4a0"/>
<rect x="17" y="4" width="10" height="70" fill="#1e2a2a"/><rect x="72" y="4" width="10" height="70" fill="#1c2626"/>
<rect x="27" y="11" width="46" height="62" fill="#2c2414"/>
<g fill="#8a6a2a"><rect x="31.5" y="15" width="13.5" height="14"/><rect x="54.5" y="15" width="14.5" height="14"/><rect x="31.5" y="31.5" width="13.5" height="12"/><rect x="54.5" y="31.5" width="14.5" height="12"/><rect x="31.5" y="46" width="13.5" height="13"/><rect x="54.5" y="46" width="14.5" height="13"/><rect x="31.5" y="60.5" width="13.5" height="9"/><rect x="54.5" y="60.5" width="14.5" height="9"/></g>
<g fill="#a07c34" opacity="0.7"><rect x="33" y="17" width="10" height="9"/><rect x="56" y="17" width="11" height="9"/><rect x="33" y="33" width="10" height="8"/><rect x="56" y="48" width="11" height="8"/></g>
<rect x="47.5" y="11" width="4.5" height="62" fill="#14140e"/>
<rect x="0" y="69" width="100" height="10" fill="#2a2420"/>
<g fill="#a88c74"><circle cx="6" cy="74" r="2.4"/><circle cx="16" cy="72" r="2.4"/><circle cx="26" cy="74" r="2.2"/><circle cx="38" cy="72" r="2.4"/><circle cx="49" cy="70" r="2.4"/><circle cx="62" cy="73" r="2.4"/><circle cx="74" cy="71" r="2.2"/><circle cx="84" cy="72" r="2.4"/><circle cx="94" cy="74" r="2.4"/></g>
<g fill="#c8c0b8"><rect x="58" y="66" width="2" height="6"/><rect x="78" y="74" width="6" height="5"/><rect x="88" y="75" width="6" height="4"/></g></g></svg><div class="lb">Floren...</div><div class="dt"><i style="left:0"></i><i style="left:5px"></i><i style="left:10px"></i></div></div>
<div class="th" style="left:480px"><svg viewBox="0 0 100 79" preserveAspectRatio="none"><g filter="url(#tb)"><rect x="-5" y="-5" width="110" height="89" fill="#777"/><rect width="100" height="79" fill="#9c918c"/>
<rect x="86" y="0" width="14" height="79" fill="#e6efd6"/>
<path d="M44,0H52V30H44Z" fill="#cfd8cc"/>
<path d="M14,0H40Q46,10 46,24H30L16,8Z" fill="#b4512f"/>
<rect x="25" y="0" width="2.2" height="12" fill="#e0d4c8"/>
<path d="M0,6H36V14H0Z" fill="#b8aca6"/>
<rect x="0" y="14" width="36" height="65" fill="#968a86"/>
<rect x="34" y="16" width="10" height="63" fill="#b4aaa6"/>
<rect x="48" y="0" width="38" height="79" fill="#a8a8a6"/>
<rect x="48" y="13" width="38" height="3" fill="#c8c8c4"/><rect x="48" y="52" width="40" height="4" fill="#c0bcb8"/><rect x="50" y="60" width="40" height="6" fill="#b8a8a4"/>
<g fill="#d8dcd8"><rect x="55" y="23" width="4" height="11"/><rect x="62" y="23" width="4" height="11"/><rect x="68" y="23" width="4" height="11"/><rect x="75" y="23" width="4" height="11"/></g>
<g fill="#6a5a58"><rect x="55" y="40" width="3.4" height="8"/><rect x="62" y="40" width="3.4" height="8"/><rect x="69" y="40" width="3.4" height="8"/><rect x="76" y="40" width="3.4" height="8"/></g>
<rect x="58" y="0" width="7" height="8" fill="#3a3a38"/><rect x="68" y="0" width="7" height="8" fill="#3a3a38"/>
<circle cx="16" cy="38" r="7.5" fill="#c4bab4"/><circle cx="16" cy="38" r="4.5" fill="#5e463c"/>
<path d="M8,79V66Q8,58 16,58Q23,58 23,66V79Z" fill="#5c4636"/>
<path d="M6,60L16,48L26,60Z" fill="#a89c94"/>
<g fill="#5e5250"><rect x="9" y="17" width="2.6" height="8"/><rect x="15" y="17" width="2.6" height="8"/><rect x="21" y="17" width="2.6" height="8"/><rect x="29" y="17" width="3" height="9"/><rect x="29" y="30" width="3" height="9"/><rect x="29" y="44" width="3" height="9"/></g>
<path d="M0,56L4,60V79H0Z" fill="#1c1a18"/>
<path d="M88,44L100,31V44Z" fill="#14140f"/><path d="M97,44H100V66H97Z" fill="#22201a"/>
<path d="M88,66L100,60V79H88Z" fill="#46462c"/>
<rect x="48" y="70" width="40" height="9" fill="#8c8480"/></g></svg><div class="lb">Floren...</div><div class="dt"><i style="left:0"></i><i style="left:5px"></i><i style="left:10px"></i></div></div>
<div class="th" style="left:596px"><svg viewBox="0 0 100 79" preserveAspectRatio="none"><g filter="url(#tb)"><rect x="-5" y="-5" width="110" height="89" fill="#777"/><rect width="100" height="79" fill="#d2daee"/>
<ellipse cx="50" cy="10" rx="26" ry="10" fill="#f4f6fa"/><ellipse cx="20" cy="30" rx="22" ry="8" fill="#e2e6f2"/>
<rect x="0" y="36" width="82" height="8" fill="#dcdce8"/>
<path d="M0,36L8,34L16,38L24,40H80V58H0Z" fill="#7c5c5a"/>
<path d="M0,42H80V48H0Z" fill="#8e6a5c"/><path d="M0,48H80V52H0Z" fill="#a07c58" opacity="0.6"/>
<path d="M10,52H60V60H10Z" fill="#3a3434"/>
<path d="M0,56H50V79H0Z" fill="#8a8674"/>
<path d="M0,66H46V72H0Z" fill="#a09a80"/>
<path d="M16,60Q28,54 40,58V64H16Z" fill="#4a4848"/>
<path d="M80,0H100V66H84L80,40Z" fill="#5c4a48"/>
<path d="M86,4H100V60H90Z" fill="#7a6662"/><rect x="92" y="20" width="4" height="40" fill="#3a2e30"/>
<path d="M44,60H100V79H20Z" fill="#a29aaa"/>
<path d="M44,58L54,58L60,79H22Z" fill="#c2c2ce"/>
<path d="M54,58H58L62,79H56Z" fill="#3a3a44"/>
<path d="M60,64L70,79H64L58,66Z" fill="#d0d0d8"/>
<rect x="52" y="54" width="8" height="6" fill="#e0dce4"/>
<rect x="0" y="76" width="100" height="3" fill="#4a4448" opacity="0.5"/></g></svg><div class="lb">Floren...</div><div class="dt"><i style="left:0"></i><i style="left:5px"></i><i style="left:10px"></i></div></div>
<div class="th" style="left:712px"><svg viewBox="0 0 100 79" preserveAspectRatio="none"><g filter="url(#tb)"><rect x="-5" y="-5" width="110" height="89" fill="#777"/><rect width="100" height="79" fill="#c2bad0"/>
<path d="M60,0H100V34H60Z" fill="#dcd8dc"/><path d="M84,6H100V30H84Z" fill="#eeeee2"/>
<path d="M0,0H30L22,22L10,34H0Z" fill="#3e3010"/>
<path d="M0,0H26L14,18L0,30Z" fill="#584612"/>
<path d="M0,20Q12,8 24,0H32L18,28L16,64H0Z" fill="#2e2414"/>
<path d="M22,22L42,14L62,24V32H22Z" fill="#a08a82"/>
<path d="M22,22L30,18L34,26H22Z" fill="#8a3c30"/>
<path d="M20,26L100,24V34H20Z" fill="#6a625c"/>
<path d="M20,30H100V38H20Z" fill="#b2aaac"/>
<rect x="20" y="36" width="80" height="30" fill="#544a46"/>
<g fill="#bcb6be"><path d="M40,64V46Q40,36 46,36Q52,36 52,46V64Z"/><path d="M54,64V46Q54,37 59,37Q64,37 64,46V64Z"/><path d="M72,64V46Q72,38 77,38Q82,38 82,46V64Z"/><path d="M84,64V47Q84,39 89,39Q93,39 93,47V64Z"/><path d="M95,64V48Q95,40 100,40V64Z"/></g>
<path d="M26,64V46Q26,36 32,36Q38,36 38,46V64Z" fill="#3a302c"/>
<rect x="0" y="30" width="22" height="40" fill="#3a2e28"/>
<rect x="4" y="34" width="4" height="30" fill="#5e524c"/><rect x="12" y="36" width="4" height="28" fill="#5a4e48"/>
<path d="M0,64H70V79H0Z" fill="#5c4e46"/>
<path d="M22,60H100V72H30Z" fill="#9a9a98"/>
<g fill="#dcdcdc"><rect x="24" y="62" width="10" height="4"/><rect x="40" y="64" width="12" height="5"/><rect x="56" y="66" width="10" height="5"/><rect x="76" y="60" width="14" height="4"/></g>
<path d="M70,66H100V79H64Z" fill="#2e2a28"/>
<path d="M72,70Q78,66 82,70V77H72Z" fill="#c44434"/>
<rect x="84" y="73" width="16" height="6" fill="#a8aaa8"/>
<path d="M29,0H40L40,10L37,68L40,71H30L33,66L31,12Z" fill="#2c2218"/>
<path d="M61,0H72L70,10V70L72,79H60L63,70V10Z" fill="#28201a"/>
<path d="M17,14L25,14L24,66H18Z" fill="#2a2016"/></g></svg><div class="lb">Floren...</div><div class="dt"><i style="left:0"></i><i style="left:5px"></i><i style="left:10px"></i></div></div>
<div class="th" style="left:828px"><svg viewBox="0 0 100 79" preserveAspectRatio="none"><g filter="url(#tb)"><rect x="-5" y="-5" width="110" height="89" fill="#777"/><rect width="100" height="79" fill="#2e3222"/>
<rect width="100" height="32" fill="#f1f1e2"/>
<path d="M60,0H100V28H60Z" fill="#e4ecec"/><ellipse cx="70" cy="16" rx="16" ry="5" fill="#f6f4e6"/><ellipse cx="94" cy="20" rx="8" ry="4" fill="#f4f2e4"/>
<path d="M0,0H100V6H0Z" fill="#e8ecdc"/>
<path d="M0,30H100V50H0Z" fill="#8a7a7a"/>
<path d="M0,28H100V33H0Z" fill="#a89ca0"/>
<rect x="52" y="22" width="2.4" height="10" fill="#6a5a58"/><rect x="87" y="24" width="2.4" height="8" fill="#7a6a68"/><rect x="82" y="28" width="3" height="5" fill="#8a7a78"/>
<path d="M24,37H100V46H30Z" fill="#c4b494"/>
<path d="M0,36H24V44H0Z" fill="#6a6470"/><path d="M2,38H22V40H2Z" fill="#c8c8d0"/>
<path d="M0,44H100V54H0Z" fill="#6a5a50"/>
<path d="M40,46H70V54H40Z" fill="#5a4a44"/>
<path d="M60,48H100V56H60Z" fill="#a09070"/>
<path d="M0,50Q10,46 20,52Q28,44 36,52Q50,56 60,54Q80,52 100,56V79H0Z" fill="#2c3020"/>
<ellipse cx="22" cy="54" rx="7" ry="8" fill="#1c2014"/><ellipse cx="42" cy="58" rx="5" ry="6" fill="#20261a"/><ellipse cx="76" cy="56" rx="6" ry="5" fill="#2a3420"/>
<ellipse cx="16" cy="72" rx="14" ry="9" fill="#36422c"/><ellipse cx="70" cy="64" rx="10" ry="4" fill="#5a6450"/>
<path d="M30,74L100,66V79H36Z" fill="#3c5226"/>
<path d="M50,79L100,68V79Z" fill="#76767a"/>
<path d="M90,79L100,73V79Z" fill="#6a8a3c"/></g></svg><div class="lb">Floren...</div><div class="dt"><i style="left:0"></i><i style="left:5px"></i><i style="left:10px"></i></div></div>
<div class="th" style="left:944px"><svg viewBox="0 0 100 79" preserveAspectRatio="none"><g filter="url(#tb)"><rect x="-5" y="-5" width="110" height="89" fill="#777"/><rect width="100" height="79" fill="#a48e7e"/>
<rect width="100" height="15" fill="#1e140e"/>
<g fill="#b8a08a"><rect x="6" y="0" width="5" height="15"/><rect x="29" y="0" width="6" height="15"/><rect x="52" y="0" width="9" height="15"/></g>
<g fill="#e8e0d8"><path d="M0,14L3,10L6,14Z"/><path d="M36,15L40,10L44,15Z"/><path d="M44,15L48,11L52,15Z"/></g>
<path d="M62,0H100V20H62Z" fill="#3a2c22"/><path d="M72,2H84V18H72Z" fill="#a89478"/><path d="M86,0H100V8H86Z" fill="#c8a878"/>
<path d="M88,8H100V24H92Z" fill="#a8b4c8"/>
<path d="M0,15H60V36H0Z" fill="#aa9484"/>
<circle cx="40" cy="30" r="3" fill="none" stroke="#7a8a8a" stroke-width="1"/>
<path d="M0,79V38Q2,30 12,30Q28,32 29,52V79Z" fill="#3c2414"/>
<path d="M0,79V50Q4,42 12,44Q20,48 20,60V79Z" fill="#7a5430"/>
<path d="M0,66H10V79H0Z" fill="#2a1a10"/>
<rect x="29" y="52" width="8" height="27" fill="#9a8674"/>
<path d="M38,79V52Q40,34 56,33Q70,36 73,56V79Z" fill="#1a100c"/>
<path d="M58,17L72,30L100,52V79H73V56Q70,40 60,34Z" fill="#988c84"/>
<path d="M60,18L100,46V52L60,24Z" fill="#c4b8ac"/>
<path d="M60,24L84,42V79H73V56Q70,40 60,34Z" fill="#8a7c70"/>
<path d="M84,40L100,52V79H84Z" fill="#908a84"/>
<path d="M76,8H88V40L76,30Z" fill="#a89070"/>
<rect x="0" y="74" width="100" height="5" fill="#2a1c14" opacity="0.5"/></g></svg><div class="lb">Floren...</div><div class="dt"><i style="left:0"></i><i style="left:5px"></i><i style="left:10px"></i></div></div>
<div class="abs" style="left:1058px;top:1299px;width:104px;height:103px;border-radius:6px;background:#4a96f0"></div>
<div class="th sel" style="left:1061px;top:1302px;width:98px;height:97px;border-radius:3px"><svg style="width:98px;height:78px" viewBox="8 6 909 609" preserveAspectRatio="none"><use href="#ph"/></svg><div class="lb" style="left:7px;top:82px">Floren...</div><div class="dt" style="left:79px;top:86px"><i style="left:0"></i><i style="left:5px"></i><i style="left:10px"></i></div></div>
<div class="th" style="left:1176px"><svg viewBox="0 0 100 79" preserveAspectRatio="none"><g filter="url(#tb)"><rect x="-5" y="-5" width="110" height="89" fill="#777"/><rect width="100" height="79" fill="#8e6a48"/>
<path d="M0,0H24V14H0Z" fill="#c8c0c0"/><rect x="8" y="2" width="8" height="10" fill="#8a7a80"/>
<path d="M0,12H22V22H0Z" fill="#b08a68"/>
<path d="M14,20L30,0H40L20,24Z" fill="#2a1c10"/>
<path d="M24,0H100V12H40Z" fill="#5e3e22"/>
<path d="M38,0H52V30H44Z" fill="#f4eee0"/>
<path d="M0,24Q8,22 14,34V58H0Z" fill="#3a200e"/>
<path d="M0,36H16V60H0Z" fill="#7a5434"/>
<path d="M16,24Q24,10 30,24V60H18Z" fill="#6a4426"/>
<path d="M22,22Q28,14 33,26V56H24Z" fill="#d8ccb8"/>
<path d="M34,20Q40,6 46,22V58H36Z" fill="#7c5430"/>
<path d="M44,26Q48,16 52,28V62H46Z" fill="#e8e0d0"/>
<path d="M52,24Q62,-4 82,14V60H54Z" fill="#7a5230"/>
<path d="M58,40Q66,26 78,36V64H58Z" fill="#c8b8a8"/>
<path d="M60,48H80V64H60Z" fill="#e8e4dc"/>
<path d="M82,0H100V30H88Z" fill="#6e4a28"/>
<path d="M90,30H100V64H90Z" fill="#fbf7ea"/>
<path d="M78,16H92V20L90,24V64L94,70H76L80,64V24Z" fill="#a89880"/>
<path d="M82,18H90V64H84Z" fill="#8c7c68"/>
<path d="M0,56L60,62L100,68V79H0Z" fill="#c8c4bc"/>
<path d="M20,58L62,64L66,79H50Z" fill="#f2efe8"/>
<path d="M62,68H100V79H62Z" fill="#a8a49c"/>
<path d="M0,58L50,79H0Z" fill="#1a2a10"/>
<path d="M0,66L30,79H0Z" fill="#2c4418"/>
<rect x="84" y="70" width="4" height="9" fill="#2a2218"/></g></svg><div class="lb">Floren...</div><div class="dt"><i style="left:0"></i><i style="left:5px"></i><i style="left:10px"></i></div></div>
<div class="th" style="left:1292px"><svg viewBox="0 0 100 79" preserveAspectRatio="none"><g filter="url(#tb)"><rect x="-5" y="-5" width="110" height="89" fill="#777"/><rect width="100" height="79" fill="#5878c0"/>
<path d="M0,0H100V20H0Z" fill="#5070b8"/>
<path d="M0,0H6Q10,10 8,24Q12,36 8,46L0,48Z" fill="#26341c"/>
<path d="M5,13L22,12V46H5Z" fill="#b08a62"/><path d="M5,13L22,12V15H5Z" fill="#c89c70"/><path d="M13,30Q14,28 15,30V40H13Z" fill="#4a3c44"/><rect x="17" y="13" width="5" height="33" fill="#9a7450"/>
<path d="M0,46L36,44L38,50L0,53Z" fill="#8c3c2a"/>
<path d="M0,52H40V79H0Z" fill="#a47c52"/>
<path d="M0,70H40V79H0Z" fill="#8c6844"/>
<path d="M14,74V68Q14,65 18,65Q22,65 22,68V74Z" fill="#2a1c18"/>
<rect x="31" y="53" width="3" height="4" fill="#5a5a78"/><rect x="26" y="66" width="3" height="4" fill="#6a5a58"/>
<path d="M0,62Q6,58 10,66L6,74H0Z" fill="#3a4424"/>
<path d="M60,10L82,0L100,8V79H38V36L60,24Z" fill="#e2dad2"/>
<path d="M48,30L60,10V24L38,36Z" fill="#2c2838"/>
<path d="M32,48L38,36V50Z" fill="#3a3040"/>
<path d="M60,10L82,0L100,8V12L82,4L60,14Z" fill="#b8aaa0"/>
<rect x="60" y="14" width="40" height="6" fill="#c8beb6"/>
<rect x="38" y="40" width="62" height="4" fill="#c0b6ae"/>
<rect x="77" y="16" width="10" height="12" fill="#b89c68"/><rect x="80" y="31" width="5" height="8" fill="#4a4448"/>
<g fill="none" stroke="#8a8088" stroke-width="1.4"><path d="M42,72V56Q42,46 50,46Q58,46 58,56V72"/><path d="M60,72V56Q60,47 67,47Q75,47 75,56V72"/><path d="M77,72V56Q77,47 84,47Q91,47 91,56V72"/><path d="M93,72V56Q93,48 100,48"/></g>
<rect x="46" y="57" width="8" height="15" fill="#8a7c6c"/><rect x="80" y="57" width="8" height="15" fill="#4a3c34"/>
<rect x="62" y="58" width="10" height="14" fill="#f0ece4"/>
<path d="M0,74H100V79H0Z" fill="#b0906c"/></g></svg><div class="lb">Floren...</div><div class="dt"><i style="left:0"></i><i style="left:5px"></i><i style="left:10px"></i></div></div>
<div class="th" style="left:1408px"><svg viewBox="0 0 100 79" preserveAspectRatio="none"><g filter="url(#tb)"><rect x="-5" y="-5" width="110" height="89" fill="#777"/><rect width="100" height="79" fill="#c2d0e0"/>
<path d="M0,0H70V20H0Z" fill="#ccd8e6"/><ellipse cx="4" cy="14" rx="7" ry="6" fill="#f2f2e0"/>
<path d="M0,21L48,16L51,23L48,24V58H0Z" fill="#786268"/>
<path d="M0,21L48,16L51,23L0,27Z" fill="#5a464c"/>
<g fill="#4a3a40"><rect x="10" y="32" width="3" height="4"/><rect x="17" y="32" width="3" height="4"/><rect x="24" y="32" width="3" height="4"/><rect x="31" y="32" width="3" height="4"/><rect x="38" y="32" width="3" height="4"/><rect x="3" y="42" width="3" height="5"/><rect x="10" y="42" width="3" height="5"/><rect x="17" y="42" width="3" height="5"/><rect x="24" y="42" width="3" height="5"/><rect x="31" y="42" width="3" height="5"/><rect x="38" y="42" width="3" height="5"/></g>
<path d="M48,26Q54,28 54,36V58H48Z" fill="#846e74"/>
<path d="M54,38L66,36V58H54Z" fill="#8a7880"/>
<path d="M70,0H100V62H70Z" fill="#88706e"/>
<path d="M76,0H100V40H82Z" fill="#7a6464"/>
<rect x="65" y="12" width="5" height="18" fill="#2c2a30"/>
<path d="M72,12Q76,8 79,14L80,30L78,48H70L71,30Z" fill="#dcd6ce"/>
<path d="M68,48Q76,44 84,50L82,58H68Z" fill="#cfc9c0"/>
<rect x="0" y="56" width="100" height="23" fill="#8a8a8a"/>
<path d="M0,55H20V60H0Z" fill="#d8d8d8"/>
<path d="M48,58H100V66H48Z" fill="#b8b4b4"/><path d="M48,66H100V72H48Z" fill="#4a4646"/>
<path d="M36,48L40,44L42,54L46,50L48,58H36Z" fill="#3a4a48"/>
<path d="M0,62H30V76H0Z" fill="#5a5458" opacity="0.6"/>
<g fill="#1c1a1c"><path d="M8,62Q11,58 14,62L15,78H7Z"/><path d="M15,60Q18,57 21,61L22,76H14Z"/><path d="M26,60Q31,56 35,61L36,76H27Z"/><path d="M68,62Q71,59 74,63L76,76H68Z"/></g>
<rect x="4" y="64" width="3" height="8" fill="#c8a830"/>
<path d="M43,62Q46,60 48,63L48,72H43Z" fill="#e8e8e8"/>
<path d="M36,60H42V72H36Z" fill="#8a7c70"/>
<path d="M62,63Q66,60 69,64L70,79H62Z" fill="#c83020"/>
<path d="M76,62H82V72H76Z" fill="#7a86a0"/>
<rect x="0" y="75" width="100" height="4" fill="#787878"/></g></svg><div class="lb">Floren...</div><div class="dt"><i style="left:0"></i><i style="left:5px"></i><i style="left:10px"></i></div></div>
<!--STRIP-END-->

<!-- PANEL -->
<div id="panel" class="abs"></div>
<!--PANEL-START-->
<!-- preview box -->
<div class="abs" style="left:2288px;top:48px;width:272px;height:151px;background:#fff"></div>
<div class="abs" style="left:2312px;top:50px;width:224px;height:148px;background:#000;overflow:hidden">
  <svg class="abs" style="left:1px;top:1px" width="222" height="146" viewBox="0 0 925 615" preserveAspectRatio="none"><use href="#ph"/></svg>
</div>
<!-- super focus / remove object -->
<div class="abs" style="left:2288px;top:199px;width:272px;height:36px;background:#e2e2e2"></div>
<div class="vsep" style="left:2431px;top:199px;height:36px;background:#d2d2d2"></div>
<svg class="abs" style="left:2296px;top:209px" width="17" height="15" viewBox="0 0 17 15" fill="none" stroke="#222" stroke-width="1.2"><rect x="0.7" y="0.9" width="15.2" height="13" rx="1.6"/><path d="M3.6 7V3.9H7M13 8V11H9.8" stroke-width="1.1"/></svg>
<div class="t" style="left:2320px;top:210px;font-size:13px;color:#222;letter-spacing:-0.25px;-webkit-text-stroke:0.25px #222">Super focus BETA</div>
<svg class="abs" style="left:2440px;top:207px" width="18" height="20" viewBox="0 0 18 20" fill="none" stroke="#222" stroke-width="1.2" stroke-linejoin="round"><path d="M9.6 2.2L16.4 8.6L11.2 14.4L5.4 14.4L1.4 10.4Z"/><path d="M5.2 17.6H16.6"/></svg>
<div class="t" style="left:2465px;top:210px;font-size:13px;color:#222;letter-spacing:-0.2px;-webkit-text-stroke:0.25px #222">Remove object</div>
<!-- add enhancements -->
<div class="abs" style="left:2288px;top:235px;width:224px;height:48px;background:#4299ff"></div>
<div class="abs" style="left:2512px;top:235px;width:48px;height:48px;background:#e2e2e2"></div>
<div class="t" style="left:2304px;top:252px;font-size:13px;color:#fff">Add enhancements</div>
<svg class="abs" style="left:2479px;top:250px" width="18" height="18" viewBox="0 0 18 18" fill="none" stroke="#fff" stroke-width="1.3"><path d="M9 1.5V16.5M1.5 9H16.5"/></svg>
<svg class="abs" style="left:2527px;top:250px" width="18" height="18" viewBox="0 0 18 18" fill="none" stroke="#333" stroke-width="1.4"><path d="M4.6 1.2V13.2H16.6M1 4.6H13V16.8"/></svg>

<!-- suggestions -->
<svg class="abs" style="left:2304px;top:1105px" width="16" height="19" viewBox="0 0 16 19"><path d="M9.6 0.8L1.6 10.4H7.2L5.6 18.2L14.2 7.8H8.4Z" fill="#222"/></svg>
<div class="t" style="left:2329px;top:1103px;font-size:13px;line-height:15px;color:#222;white-space:normal;width:205px;letter-spacing:-0.12px">Here are some suggestions to get you started...</div>
<svg class="abs" style="left:2538px;top:1109px" width="14" height="14" viewBox="0 0 14 14" fill="none" stroke="#333" stroke-width="1.1"><path d="M2 2L12 12M12 2L2 12"/></svg>

<div class="card" style="top:1144px"></div>
<svg class="abs" style="left:2318px;top:1156px" width="18" height="18" viewBox="0 0 18 18" fill="none" stroke="#222" stroke-width="1.1"><path d="M2 16L16 2M10.4 2H16V7.6M2 10.6V16H7.4"/></svg>
<div class="t" style="left:2349px;top:1158px;font-size:13px;color:#222">Upscale</div>
<div class="abs" style="left:2530px;top:1163px;width:4px;height:4px;border-radius:2px;background:#cddc39;border:1px solid #333"></div>

<div class="card" style="top:1190px"></div>
<svg class="abs" style="left:2318px;top:1202px" width="18" height="18" viewBox="0 0 18 18" fill="none" stroke="#222" stroke-width="1"><circle cx="9" cy="9" r="7.6" stroke-width="1.2"/><path d="M5.4 2.6V15.4M9 1.6V16.4M12.6 2.6V15.4M2.6 5.4H15.4M1.6 9H16.4M2.6 12.6H15.4" stroke-dasharray="1.6 1.2" stroke="#444"/></svg>
<div class="t" style="left:2349px;top:1204px;font-size:13px;color:#222">Denoise <i style="color:#4a97f0;margin-left:1px">all</i></div>

<div class="card" style="top:1236px"></div>
<svg class="abs" style="left:2318px;top:1248px" width="18" height="18" viewBox="0 0 18 18" fill="none" stroke="#222" stroke-width="1.2" stroke-linejoin="round"><path d="M9 2.2L16.4 15.2H1.6Z"/></svg>
<div class="t" style="left:2349px;top:1250px;font-size:13px;color:#222">Sharpen <i style="color:#8a8a8a;margin-left:2px">the</i> <i style="color:#4a97f0;margin-left:2px">subject</i></div>

<svg class="abs" style="left:2306px;top:1288px" width="14" height="14" viewBox="0 0 14 14" fill="none" stroke="#333" stroke-width="1"><circle cx="7" cy="7" r="5.6"/><path d="M7 6.2V10M5.8 6.3H7M5.6 10H8.4" stroke-width="1.1"/><circle cx="7" cy="4.2" r="0.7" fill="#333" stroke="none"/></svg>
<div class="t" style="left:2325px;top:1288px;font-size:13px;font-style:italic;color:#222;letter-spacing:-0.15px">How do we make suggestions?</div>

<div class="card" style="top:1310px"></div>
<div class="t" style="left:2320px;top:1324px;font-size:13px;color:#222;letter-spacing:-0.1px">Apply recommendations</div>
<div class="abs" style="left:2532px;top:1329px;width:4px;height:4px;border-radius:2px;background:#cddc39;border:1px solid #333"></div>

<!-- export -->
<div class="abs" style="left:2288px;top:1368px;width:223px;height:48px;background:#e0e0e0"></div>
<div class="abs" style="left:2512px;top:1368px;width:48px;height:48px;background:#e0e0e0"></div>
<svg class="abs" style="left:2350px;top:1382px" width="16" height="20" viewBox="0 0 16 20" fill="none" stroke="#4a97f0" stroke-width="1.2" stroke-linejoin="round"><path d="M5.4 7H2V18.4H14V7H10.6M8 13V1.4M4.8 4.6L8 1.4L11.2 4.6"/></svg>
<div class="t" style="left:2374px;top:1385px;font-size:13.2px;color:#222;-webkit-text-stroke:0.2px #222">Export image</div>
<svg class="abs" style="left:2526px;top:1382px" width="20" height="20" viewBox="0 0 20 20" fill="none" stroke="#333" stroke-width="1.2" stroke-linejoin="round"><path d="M5 6.4H12.6V16.6H2.4V9Z"/><path d="M5 6.4L7.6 4.4H11M15.4 9V14L12.6 16.6M12.6 6.4L15 4.6"/><path d="M13.4 2.2H17V5.8M17 2.2L11.6 7.6"/><circle cx="6.4" cy="10.6" r="1.1"/><path d="M2.6 16.4L8 12L12.4 16"/></svg>
<!--PANEL-END-->
</body>
</html>
